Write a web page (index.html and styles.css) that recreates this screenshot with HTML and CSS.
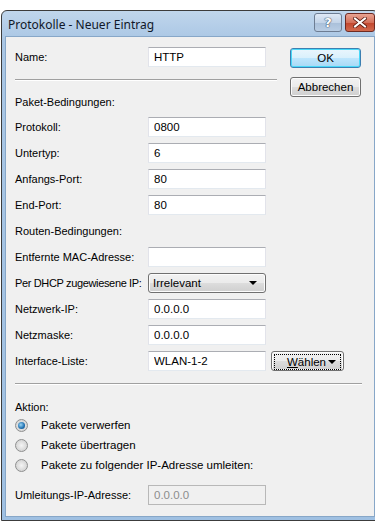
FILE: index.html
```html
<!DOCTYPE html>
<html lang="de">
<head>
    <meta charset="UTF-8">
    <meta name="viewport" content="width=device-width, initial-scale=1.0">
    <title>Protokolle - Neuer Eintrag</title>
    <link rel="stylesheet" href="styles.css">
</head>
<body>
    <div class="window">
        <div class="titlebar">
            <span class="title">Protokolle - Neuer Eintrag</span>
            <div class="caption-buttons">
                <span class="cap-btn help">?</span>
                <span class="cap-btn close">
                    <svg width="14" height="11" viewBox="0 0 14 11">
                        <path d="M2 1.5 L12 9.5 M12 1.5 L2 9.5" stroke="#5a1a10" stroke-width="3.6" stroke-linecap="square"/>
                        <path d="M2 1.5 L12 9.5 M12 1.5 L2 9.5" stroke="#ffffff" stroke-width="2" stroke-linecap="square"/>
                    </svg>
                </span>
            </div>
        </div>
        <div class="content">
            <div class="top">
                <div class="top-left">
                    <div class="row">
                        <label>Name:</label>
                        <input type="text" value="HTTP">
                    </div>
                    <div class="sep short"></div>
                </div>
                <div class="buttons">
                    <button class="btn default">OK</button>
                    <button class="btn">Abbrechen</button>
                </div>
            </div>

            <div class="heading first">Paket-Bedingungen:</div>
            <div class="row"><label>Protokoll:</label><input type="text" value="0800"></div>
            <div class="row"><label>Untertyp:</label><input type="text" value="6"></div>
            <div class="row"><label>Anfangs-Port:</label><input type="text" value="80"></div>
            <div class="row"><label>End-Port:</label><input type="text" value="80"></div>

            <div class="heading">Routen-Bedingungen:</div>
            <div class="row"><label>Entfernte MAC-Adresse:</label><input type="text" value=""></div>
            <div class="row">
                <label class="tight">Per DHCP zugewiesene IP:</label>
                <div class="combo">Irrelevant<span class="arrow"></span></div>
            </div>
            <div class="row"><label>Netzwerk-IP:</label><input type="text" value="0.0.0.0"></div>
            <div class="row"><label>Netzmaske:</label><input type="text" value="0.0.0.0"></div>
            <div class="row">
                <label>Interface-Liste:</label>
                <input type="text" value="WLAN-1-2">
                <div class="btn pick"><span class="focus"><u>W</u>ählen<span class="arrow"></span></span></div>
            </div>

            <div class="sep long"></div>

            <div class="aktion">Aktion:</div>
            <div class="radio"><span class="dot checked"></span>Pakete verwerfen</div>
            <div class="radio"><span class="dot"></span>Pakete übertragen</div>
            <div class="radio"><span class="dot"></span>Pakete zu folgender IP-Adresse umleiten:</div>

            <div class="row last"><label>Umleitungs-IP-Adresse:</label><input type="text" value="0.0.0.0" disabled></div>
        </div>
    </div>
</body>
</html>
```

FILE: styles.css
```css
body {
    margin: 0;
    padding: 0;
    background: #ffffff;
    font-family: "Liberation Sans", Arial, sans-serif;
    font-size: 11px;
    color: #000;
}
.window {
    margin: 10px 0 0 1px;
    width: 370px;
    border: 1px solid #3c3c3c;
    border-radius: 6px 6px 0 0;
    background: linear-gradient(#c0d6ec, #a9c6e4 30px, #9fc0e2);
    padding: 0 3px 3px 3px;
}
.titlebar {
    height: 25px;
    display: flex;
    align-items: center;
    justify-content: space-between;
}
.title {
    font-family: "Noto Sans", "Open Sans", sans-serif;
    font-size: 12px;
    color: #101828;
    padding-left: 3px;
    margin-top: 1px;
}
.caption-buttons {
    display: flex;
    gap: 3px;
    align-self: flex-start;
    margin-top: 2px;
}
.cap-btn {
    height: 17px;
    border: 1px solid #6d7d93;
    border-radius: 3px;
    display: flex;
    align-items: center;
    justify-content: center;
}
.help {
    width: 26px;
    background: linear-gradient(#dfe9f5, #c3d4e8 50%, #a9bfd9 51%, #b9cde4);
    color: #fff;
    font-family: "DejaVu Sans", sans-serif;
    font-weight: bold;
    font-size: 13px;
    text-shadow: 0 0 1px #3d4f68, 0 0 1px #3d4f68, 0 0 1px #3d4f68;
}
.close {
    width: 28px;
    border-color: #6e2a22;
    background: linear-gradient(#e8a493, #d4705a 50%, #c2452d 51%, #d26a4e);
}
.content {
    background: #f0f0f0;
    border: 1px solid #87a7c8;
    height: 469px;
    padding: 10px 0 0 9px;
}
.top {
    display: flex;
    align-items: flex-start;
    height: 34px;
}
.top-left {
    width: 262px;
}
.buttons {
    display: flex;
    flex-direction: column;
    gap: 9px;
    margin-left: 13px;
    padding-top: 1px;
}
.btn {
    width: 71px;
    height: 20px;
    border: 1px solid #707070;
    border-radius: 3px;
    background: linear-gradient(#f2f2f2, #ebebeb 50%, #dddddd 51%, #cfcfcf);
    font-family: "Liberation Sans", Arial, sans-serif;
    font-size: 11.5px;
    color: #000;
    padding: 0;
    box-shadow: inset 0 0 0 1px #fcfcfc;
}
.btn.default {
    border-color: #3c7fb1;
    background: linear-gradient(#eaf6fd, #d9f0fc 50%, #bee6fd 51%, #a7d9f5);
    box-shadow: inset 0 0 0 1px #48d8f8;
}
.row {
    display: flex;
    align-items: center;
    height: 20px;
    margin-bottom: 6px;
}
.row label {
    width: 133px;
    flex-shrink: 0;
    white-space: nowrap;
}
.row label.tight {
    letter-spacing: -0.35px;
}
.row input {
    width: 118px;
    height: 20px;
    box-sizing: border-box;
    margin: 0;
    padding: 0 0 0 5px;
    border: 1px solid #dbdfe6;
    border-top-color: #abadb3;
    border-left-color: #e2e3ea;
    border-right-color: #e2e3ea;
    border-bottom-color: #e3e9ef;
    background: #fff;
    font-family: "Liberation Sans", Arial, sans-serif;
    font-size: 11.5px;
    color: #000;
}
.row input:disabled {
    background: #f0f0f0;
    color: #8d8d8d;
    border-color: #b8b8b8;
}
.top-left .row {
    margin-bottom: 0;
}
.sep {
    height: 1px;
    background: #a0a0a0;
    border-bottom: 1px solid #ffffff;
}
.sep.short {
    margin-top: 12px;
    width: 262px;
}
.sep.long {
    margin-top: 12px;
    width: 347px;
}
.heading {
    height: 20px;
    line-height: 20px;
    margin-bottom: 6px;
}
.heading.first {
    margin-top: 11px;
    margin-bottom: 5px;
}
.combo {
    position: relative;
    width: 118px;
    height: 20px;
    box-sizing: border-box;
    border: 1px solid #707070;
    border-radius: 3px;
    background: linear-gradient(#f2f2f2, #ebebeb 50%, #dddddd 51%, #cfcfcf);
    box-shadow: inset 0 0 0 1px #fcfcfc;
    padding-left: 4px;
    line-height: 18px;
    font-size: 11.5px;
}
.arrow {
    position: absolute;
    right: 8px;
    top: 7px;
    width: 0;
    height: 0;
    border-left: 4px solid transparent;
    border-right: 4px solid transparent;
    border-top: 4px solid #000;
}
.btn.pick {
    width: 73px;
    margin-left: 5px;
    box-sizing: border-box;
    padding: 2px;
}
.focus {
    position: relative;
    display: block;
    height: 14px;
    border: 1px dotted #000;
    line-height: 14px;
    padding-left: 12px;
    font-size: 11.5px;
}
.focus .arrow {
    right: 4px;
    top: 5px;
}
.aktion {
    margin-top: 14px;
    height: 16px;
    line-height: 16px;
}
.radio {
    display: flex;
    align-items: center;
    height: 20px;
    font-size: 11.5px;
}
.dot {
    width: 11px;
    height: 11px;
    border: 1px solid #8e8f8f;
    border-radius: 50%;
    background: radial-gradient(circle at 50% 50%, #f4f4f4, #d6d6d6 70%, #e8e8e8);
    margin-right: 13px;
    position: relative;
}
.dot.checked::after {
    content: "";
    position: absolute;
    left: 2px;
    top: 2px;
    width: 7px;
    height: 7px;
    border-radius: 50%;
    background: radial-gradient(circle at 40% 40%, #9bd6f5, #1e6fb0 60%, #0d3f70);
}
.row.last {
    margin-top: 10px;
}
```
